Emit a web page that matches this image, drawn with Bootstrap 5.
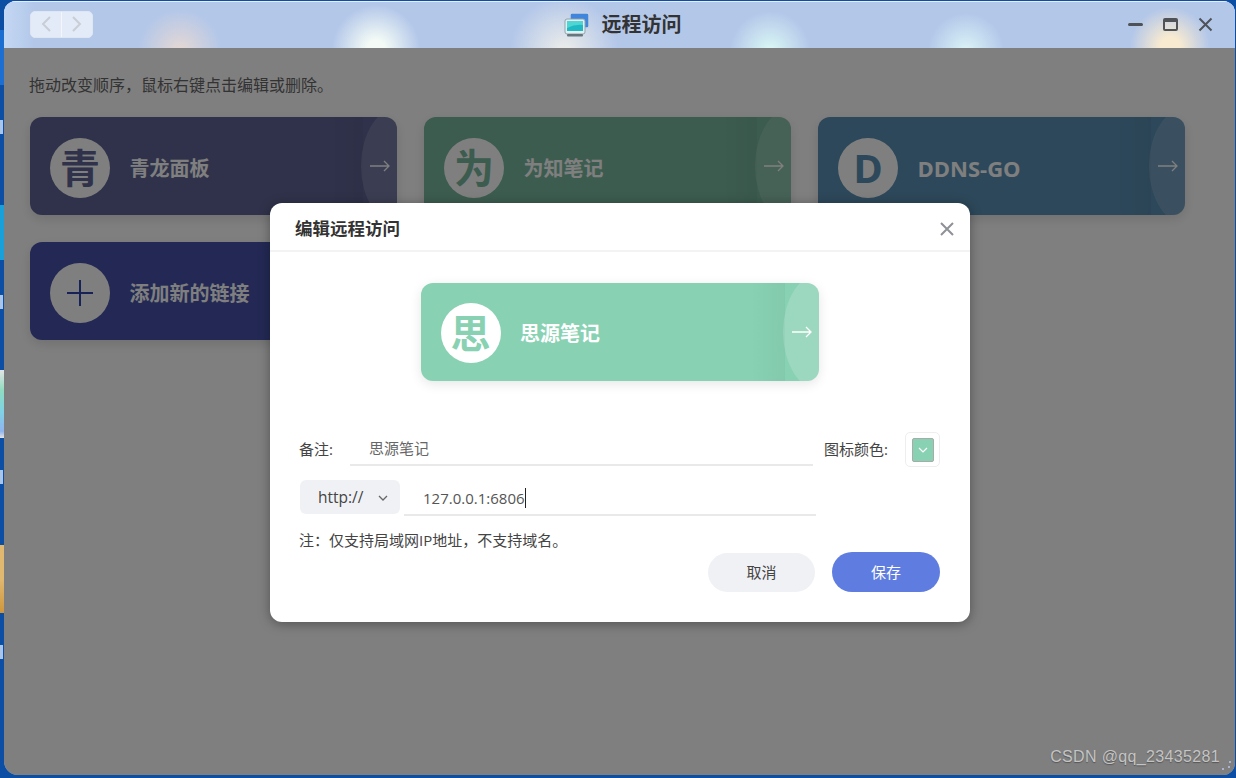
<!DOCTYPE html>
<html lang="zh-CN">
<head>
    <meta charset="UTF-8">
    <meta name="viewport" content="width=device-width, initial-scale=1.0">
    <title>远程访问</title>
    <link href="https://cdn.jsdelivr.net/npm/bootstrap@5.3.0/dist/css/bootstrap.min.css" rel="stylesheet">
    <style>
        html, body { height: 100%; }
        body {
            margin: 0; overflow: hidden; background: #0b4ea4; color: #444;
            font-family: "Open Sans", "Noto Sans CJK SC", sans-serif; font-size: 15px;
        }
        /* bits of the desktop showing left of the window */
        .desk-bit { position: absolute; left: 0; width: 4px; }
        .bit-a { top: 30px; height: 55px; background: #1c6fd0; }
        .bit-b { top: 205px; height: 55px; background: #1aa0d8; }
        .bit-c { top: 370px; height: 68px; background: linear-gradient(180deg, #e4e4e4 0, #8fdcc0 30%, #7fd4e4 60%, #8fb4f0 90%, #e4e4e4 100%); }
        .bit-d { top: 545px; height: 68px; background: linear-gradient(180deg, #e0b870 0, #e0b870 50%, #cf963c 100%); }
        .desk-txt { position: absolute; left: 0; width: 3px; height: 14px; background: #a9c6ea; }
        .txt-a { top: 120px; }
        .txt-b { top: 295px; }
        .txt-c { top: 470px; }
        .txt-d { top: 645px; }

        .win {
            position: absolute; left: 4px; top: 1px; width: 1231px; height: 774px;
            background: #fff; border-radius: 12px 12px 12px 14px; overflow: hidden;
        }
        .win-bar {
            height: 47px; padding: 0 22px 0 26px; color: #333; background-color: #b3c7e9;
            box-shadow: inset 0 1px 0 #e6edf8;
            background-image:
                radial-gradient(circle 42px at 176px 50px, #e6d8d4 0, rgba(230,216,212,0) 100%),
                radial-gradient(circle 44px at 372px 48px, #f4fbf6 20%, rgba(244,251,246,0) 100%),
                radial-gradient(circle 54px at 560px 50px, #e8eaea 10%, rgba(232,234,234,0) 100%),
                radial-gradient(circle 40px at 766px 50px, #d8f4f4 10%, rgba(216,244,244,0) 100%),
                radial-gradient(circle 38px at 962px 50px, #d8f0f6 10%, rgba(216,240,246,0) 100%),
                radial-gradient(circle 40px at 1166px 46px, #f8ead0 25%, rgba(248,234,208,0) 100%),
                linear-gradient(90deg, #c4d8f4 0, #b3c7e9 30px);
        }
        .nav-pair { width: 63px; height: 27px; margin-top: -1px; background: #e4ebf8; border: 1px solid #dfe6f2; border-radius: 5px; }
        .nav-pair > span { flex: 1; }
        .nav-pair > span + span { border-left: 1px solid #f4f6fb; }
        .win-title { font-size: 20px; font-weight: 600; line-height: 1; }
        .win-ctl { gap: 20px; }

        .win-body { padding: 25px 0 0 26px; }
        .hint-top { font-size: 16px; line-height: 24px; margin: 0 0 20px -1px; color: #666; }
        .tile-grid { display: grid; grid-template-columns: repeat(3, 367px); gap: 27px; }
        .tile {
            position: relative; height: 98px; padding: 4px 20px 0; overflow: hidden; border-radius: 12px;
            color: #fff; font-size: 20px; font-weight: 700; gap: 19.5px;
            box-shadow: 0 4px 12px rgba(0, 0, 0, .12);
        }
        .tile > span { margin-top: 1px; }
        .tile-c1 { background: #5e6494; --ink: #5e6494; }
        .tile-c2 { background: #78b89e; --ink: #78b89e; }
        .tile-c3 { background: #5a90b4; --ink: #5a90b4; }
        .tile-c4 { background: #4652a8; --ink: #2c44b0; }
        .tile-dot {
            width: 60px; height: 60px; flex: none; border-radius: 50%; background: #fff; color: var(--ink);
            font-size: 40px; line-height: 1;
        }
        .tile > span.tile-latin { font-size: 22px; }
        .tile-shade { position: absolute; top: 0; bottom: 0; right: 34px; width: 34px; background: linear-gradient(90deg, rgba(0,0,0,0), rgba(0,0,0,.035)); }
        .tile-bulge { position: absolute; top: -11px; right: -44px; width: 80px; height: 120px; border-radius: 50%; background: rgba(255,255,255,.16); }
        .tile-arrow { position: absolute; top: 43px; right: 7px; }

        .backdrop { position: absolute; left: 0; right: 0; top: 47px; bottom: 0; background: rgba(0, 0, 0, .5); }
        .wm {
            position: absolute; right: 15px; bottom: 6px; font-family: "Liberation Sans", sans-serif;
            font-size: 16px; letter-spacing: .35px; color: #c4c4c4; text-shadow: 0 1px 1px #555;
        }
        .grip { position: absolute; right: 3px; bottom: 3px; }

        .dlg {
            position: absolute; left: 266px; top: 202px; width: 700px; height: 419px; background: #fff;
            border-radius: 12px; box-shadow: 0 2px 12px rgba(0, 0, 0, .35);
        }
        .dlg-head { height: 49px; padding: 4px 15px 0 25px; border-bottom: 2px solid #f3f3f3; }
        .dlg-title { font-size: 17.5px; font-weight: 600; color: #333; }
        .dlg-body { padding: 31px 30px 0 29px; }
        .tile-preview {
            width: 398px; margin: 0 auto 51px; padding-top: 2px; background: #88d1b3; --ink: #88d1b3;
            box-shadow: 0 3px 12px rgba(0, 0, 0, .1);
        }
        .tile-preview > span { margin-top: 2px; }

        .f-label { line-height: 24px; white-space: nowrap; }
        .f-line {
            border: 0; border-bottom: 2px solid #e9e9e9; border-radius: 0; padding: 0 0 3px 19px;
            color: #666; font-size: 15px; line-height: 26px; background: transparent;
        }
        .row-note { height: 35px; margin-bottom: 13px; }
        .row-note .f-label { margin-bottom: 2px; }
        .note-input { margin: 2px 11px 0 17px; }
        .swatch-box { width: 35px; height: 35px; flex: none; border: 1px solid #eee; border-radius: 5px; margin-left: 17px; }
        .swatch { width: 22px; height: 24px; background: #88d1b3; border: 1px solid #aaa; border-radius: 2px; }
        .row-addr { width: 517px; }
        .scheme {
            width: 100px; height: 34px; flex: none; margin: 0 0 2px 1px; padding: 2px 12px 0 18px; font-size: 15.5px;
            background: #f0f1f5; border-radius: 6px; color: #444;
        }
        .caret-bar { display: inline-block; width: 1px; height: 20px; background: #222; vertical-align: -4px; }
        .dark-val { color: #555; }
        .note-tip { margin-top: 12px; }
        .act-row { gap: 17px; }
        .act-btn { width: 107px; height: 39px; padding: 0; font-size: 15px; border: 0; }
        .act-cancel { background: #f0f1f5; color: #444; }
        .act-save { width: 108px; height: 40px; background: #5f7de0; color: #fff; }
    </style>
</head>
<body>
    <div class="desk-bit bit-a"></div>
    <div class="desk-bit bit-b"></div>
    <div class="desk-bit bit-c"></div>
    <div class="desk-bit bit-d"></div>
    <div class="desk-txt txt-a"></div>
    <div class="desk-txt txt-b"></div>
    <div class="desk-txt txt-c"></div>
    <div class="desk-txt txt-d"></div>

    <div class="win">
        <div class="win-bar d-flex align-items-center justify-content-between position-relative">
            <div class="nav-pair d-flex">
                <span class="d-flex align-items-center justify-content-center">
                    <svg width="14" height="18" viewBox="0 0 14 18" fill="none" stroke="#c9ced6" stroke-width="2"><path d="M11 2 4 9l7 7"/></svg>
                </span>
                <span class="d-flex align-items-center justify-content-center">
                    <svg width="14" height="18" viewBox="0 0 14 18" fill="none" stroke="#c9ced6" stroke-width="2"><path d="m3 2 7 7-7 7"/></svg>
                </span>
            </div>
            <div class="win-title d-flex align-items-center gap-2 position-absolute top-50 start-50 translate-middle">
                <svg width="32" height="28" viewBox="0 0 32 28" class="me-1">
                    <rect x="12" y="2" width="19" height="15" rx="2" fill="#3f86dc" stroke="#c6d2e0" stroke-width="1.500"/>
                    <rect x="7" y="8" width="20" height="15" rx="2" fill="#e4eef0" stroke="#8fa4ae"/>
                    <rect x="9" y="10" width="16" height="10" fill="#1fb9c4"/>
                    <path d="M9 10h16v4q-8-1-16 3z" fill="#4fd6d2"/>
                    <rect x="9" y="23" width="16" height="2.500" rx="1" fill="#66767f"/>
                </svg>
                <span>远程访问</span>
            </div>
            <div class="win-ctl d-flex align-items-center">
                <svg width="15" height="15" viewBox="0 0 15 15"><rect x="0" y="6" width="15" height="3" rx="1.5" fill="#4f5256"/></svg>
                <svg width="15" height="15" viewBox="0 0 15 15" fill="none" stroke="#4f5256" stroke-width="2"><rect x="1" y="2" width="13" height="11" rx="1"/><path d="M1 3.500h13" stroke-width="3"/></svg>
                <svg width="15" height="15" viewBox="0 0 15 15" fill="none" stroke="#4f5256" stroke-width="2"><path d="m1.500 1.500 12 12m0-12-12 12"/></svg>
            </div>
        </div>

        <div class="win-body">
            <div class="hint-top">拖动改变顺序，鼠标右键点击编辑或删除。</div>
            <div class="tile-grid">
                <div class="tile tile-c1 d-flex align-items-center">
                    <div class="tile-dot d-flex align-items-center justify-content-center">青</div>
                    <span>青龙面板</span>
                    <div class="tile-shade"></div><div class="tile-bulge"></div>
                    <svg class="tile-arrow" width="20" height="12" viewBox="0 0 20 12" fill="none" stroke="#fff" stroke-width="1.300"><path d="M0 6h19M14 1l5 5-5 5"/></svg>
                </div>
                <div class="tile tile-c2 d-flex align-items-center">
                    <div class="tile-dot d-flex align-items-center justify-content-center">为</div>
                    <span>为知笔记</span>
                    <div class="tile-shade"></div><div class="tile-bulge"></div>
                    <svg class="tile-arrow" width="20" height="12" viewBox="0 0 20 12" fill="none" stroke="#fff" stroke-width="1.300"><path d="M0 6h19M14 1l5 5-5 5"/></svg>
                </div>
                <div class="tile tile-c3 d-flex align-items-center">
                    <div class="tile-dot d-flex align-items-center justify-content-center">D</div>
                    <span class="tile-latin">DDNS-GO</span>
                    <div class="tile-shade"></div><div class="tile-bulge"></div>
                    <svg class="tile-arrow" width="20" height="12" viewBox="0 0 20 12" fill="none" stroke="#fff" stroke-width="1.300"><path d="M0 6h19M14 1l5 5-5 5"/></svg>
                </div>
                <div class="tile tile-c4 d-flex align-items-center">
                    <div class="tile-dot d-flex align-items-center justify-content-center">
                        <svg width="26" height="26" viewBox="0 0 26 26" stroke="#2c44b0" stroke-width="2"><path d="M13 0v26M0 13h26"/></svg>
                    </div>
                    <span>添加新的链接</span>
                </div>
            </div>
        </div>

        <div class="backdrop"></div>
        <div class="wm">CSDN @qq_23435281</div>
        <svg class="grip" width="14" height="14" viewBox="0 0 14 14" fill="#b8c4e8"><circle cx="12" cy="4" r="1"/><circle cx="11" cy="9" r="1"/><circle cx="5" cy="11" r="1"/></svg>

        <div class="dlg d-flex flex-column">
            <div class="dlg-head d-flex align-items-center justify-content-between">
                <span class="dlg-title">编辑远程访问</span>
                <svg width="16" height="16" viewBox="0 0 16 16" fill="none" stroke="#8e9196" stroke-width="2"><path d="m2 2 12 12M14 2 2 14"/></svg>
            </div>
            <div class="dlg-body">
                <div class="tile tile-preview d-flex align-items-center">
                    <div class="tile-dot d-flex align-items-center justify-content-center">思</div>
                    <span>思源笔记</span>
                    <div class="tile-shade"></div><div class="tile-bulge"></div>
                    <svg class="tile-arrow" width="20" height="12" viewBox="0 0 20 12" fill="none" stroke="#fff" stroke-width="1.300"><path d="M0 6h19M14 1l5 5-5 5"/></svg>
                </div>

                <div class="row-note d-flex align-items-center">
                    <span class="f-label">备注:</span>
                    <div class="form-control f-line note-input flex-grow-1">思源笔记</div>
                    <span class="f-label">图标颜色:</span>
                    <div class="swatch-box d-flex align-items-center justify-content-center">
                        <div class="swatch d-flex align-items-center justify-content-center">
                            <svg width="10" height="6" viewBox="0 0 10 6" fill="none" stroke="#fff" stroke-width="1.200"><path d="m1 1 4 4 4-4"/></svg>
                        </div>
                    </div>
                </div>

                <div class="row-addr d-flex align-items-end">
                    <div class="scheme d-flex align-items-center justify-content-between">
                        <span>http://</span>
                        <svg width="10" height="6" viewBox="0 0 10 6" fill="none" stroke="#666" stroke-width="1.300"><path d="m1 1 4 4 4-4"/></svg>
                    </div>
                    <div class="form-control f-line dark-val flex-grow-1 ms-1">127.0.0.1:6806<span class="caret-bar"></span></div>
                </div>

                <div class="f-label note-tip">注：仅支持局域网IP地址，不支持域名。</div>

                <div class="act-row d-flex justify-content-end align-items-center">
                    <button type="button" class="btn rounded-pill act-btn act-cancel">取消</button>
                    <button type="button" class="btn rounded-pill act-btn act-save">保存</button>
                </div>
            </div>
        </div>
    </div>

    <script src="https://cdn.jsdelivr.net/npm/bootstrap@5.3.0/dist/js/bootstrap.bundle.min.js"></script>
</body>
</html>
